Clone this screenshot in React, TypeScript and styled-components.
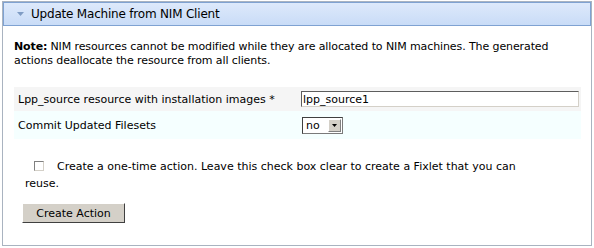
import React from "react";
import styled, { createGlobalStyle } from "styled-components";

const Global = createGlobalStyle`
  html, body { margin: 0; padding: 0; background: #fff; }
  body { font-family: "DejaVu Sans", Verdana, sans-serif; font-size: 11px; color: #000; }
`;

const Page = styled.div`
  width: 594px;
  height: 248px;
  padding: 1px 2px 2px 2px;
  box-sizing: border-box;
  background: #fff;
`;

const Panel = styled.div`
  border: 1px solid #a9b3c0;
  height: 100%;
  box-sizing: border-box;
  display: flex;
  flex-direction: column;
`;

const Header = styled.div`
  height: 24px;
  box-sizing: border-box;
  border: 1px solid #7fa2d2;
  background: linear-gradient(#dde9fb, #c9dcf7);
  display: flex;
  align-items: center;
  padding-left: 13px;
  gap: 6px;
  font-size: 12px;
  font-family: "DejaVu Sans", sans-serif;
  letter-spacing: -0.2px;
  color: #000;
`;

const Body = styled.div`
  padding: 14px 10px 0 11px;
  display: flex;
  flex-direction: column;
`;

const Note = styled.p`
  margin: 0;
  font-size: 11px;
  line-height: 14px;
  letter-spacing: -0.1px;
  font-family: "DejaVu Sans", sans-serif;
`;

const Strong = styled.strong`
  font-weight: bold;
  margin-right: 3px;
`;

const Form = styled.div`
  margin-top: 19px;
  display: flex;
  flex-direction: column;
`;

const Row = styled.div<{ $bg: string; $h: number }>`
  display: grid;
  grid-template-columns: 283px 1fr;
  align-items: center;
  height: ${(p) => p.$h}px;
  background: ${(p) => p.$bg};
  padding-left: 4px;
`;

const Label = styled.span`
  font-family: "DejaVu Sans", sans-serif;
  font-size: 11px;
`;

const TextInput = styled.div`
  margin-right: 2px;
  border-top: 1px solid #5d5d5d;
  border-left: 1px solid #5d5d5d;
  border-bottom: 1px solid #d4d0c8;
  border-right: 1px solid #d4d0c8;
  box-sizing: border-box;
  height: 16px;
  display: flex;
  align-items: center;
  padding-left: 1px;
  background: #fff;
  font-family: "DejaVu Sans", sans-serif;
  font-size: 11px;
`;

const Select = styled.div`
  width: 41px;
  height: 17px;
  margin-left: 1px;
  box-sizing: border-box;
  border: 1px solid #7a7a7a;
  border-top-color: #404040;
  border-left-color: #404040;
  display: flex;
  align-items: center;
  justify-content: space-between;
  padding: 0 1px 0 3px;
  font-family: "DejaVu Sans", sans-serif;
  font-size: 11px;
  background: #fff;
`;

const SelectBtn = styled.div`
  width: 13px;
  height: 13px;
  background: #d4d0c8;
  border: 1px solid #fff;
  border-right-color: #808080;
  border-bottom-color: #808080;
  box-sizing: border-box;
  display: flex;
  align-items: center;
  justify-content: center;
`;

const CheckLine = styled.div`
  margin-top: 19px;
  padding-left: 11px;
  width: 510px;
  font-family: "DejaVu Sans", sans-serif;
  font-size: 11px;
  line-height: 17px;
`;

const Check = styled.span`
  display: inline-block;
  width: 10px;
  height: 10px;
  box-sizing: border-box;
  border: 1px solid #d4d0c8;
  border-top-color: #808080;
  border-left-color: #808080;
  vertical-align: -1px;
  margin: 0 13px 0 9px;
`;

const Button = styled.button`
  margin-top: 11px;
  align-self: flex-start;
  width: 103px;
  height: 20px;
  margin-left: 8px;
  background: #d4d0c8;
  border: 1px solid #fff;
  border-right-color: #404040;
  border-bottom-color: #404040;
  font-family: "DejaVu Sans", sans-serif;
  font-size: 11px;
  color: #000;
  padding: 0;
`;

export default function App() {
  return (
    <>
      <Global />
      <Page>
        <Panel>
          <Header>
            <svg width="8" height="5" viewBox="0 0 8 5">
              <path d="M0 0 H7 L3.5 4 Z" fill="#7f9cc4" />
            </svg>
            <span>Update Machine from NIM Client</span>
          </Header>
          <Body>
            <Note>
              <Strong>Note:</Strong>NIM resources cannot be modified while they are allocated to NIM machines. The generated
              actions deallocate the resource from all clients.
            </Note>
            <Form>
              <Row $bg="#f5f5f5" $h={24}>
                <Label>Lpp_source resource with installation images *</Label>
                <TextInput>lpp_source1</TextInput>
              </Row>
              <Row $bg="#f5ffff" $h={28}>
                <Label>Commit Updated Filesets</Label>
                <Select>
                  <span>no</span>
                  <SelectBtn>
                    <svg width="5" height="3" viewBox="0 0 5 3">
                      <path d="M0 0 H5 L2.5 3 Z" fill="#000" />
                    </svg>
                  </SelectBtn>
                </Select>
              </Row>
            </Form>
            <CheckLine>
              <Check />
              Create a one-time action. Leave this check box clear to create a Fixlet that you can reuse.
            </CheckLine>
            <Button>Create Action</Button>
          </Body>
        </Panel>
      </Page>
    </>
  );
}
